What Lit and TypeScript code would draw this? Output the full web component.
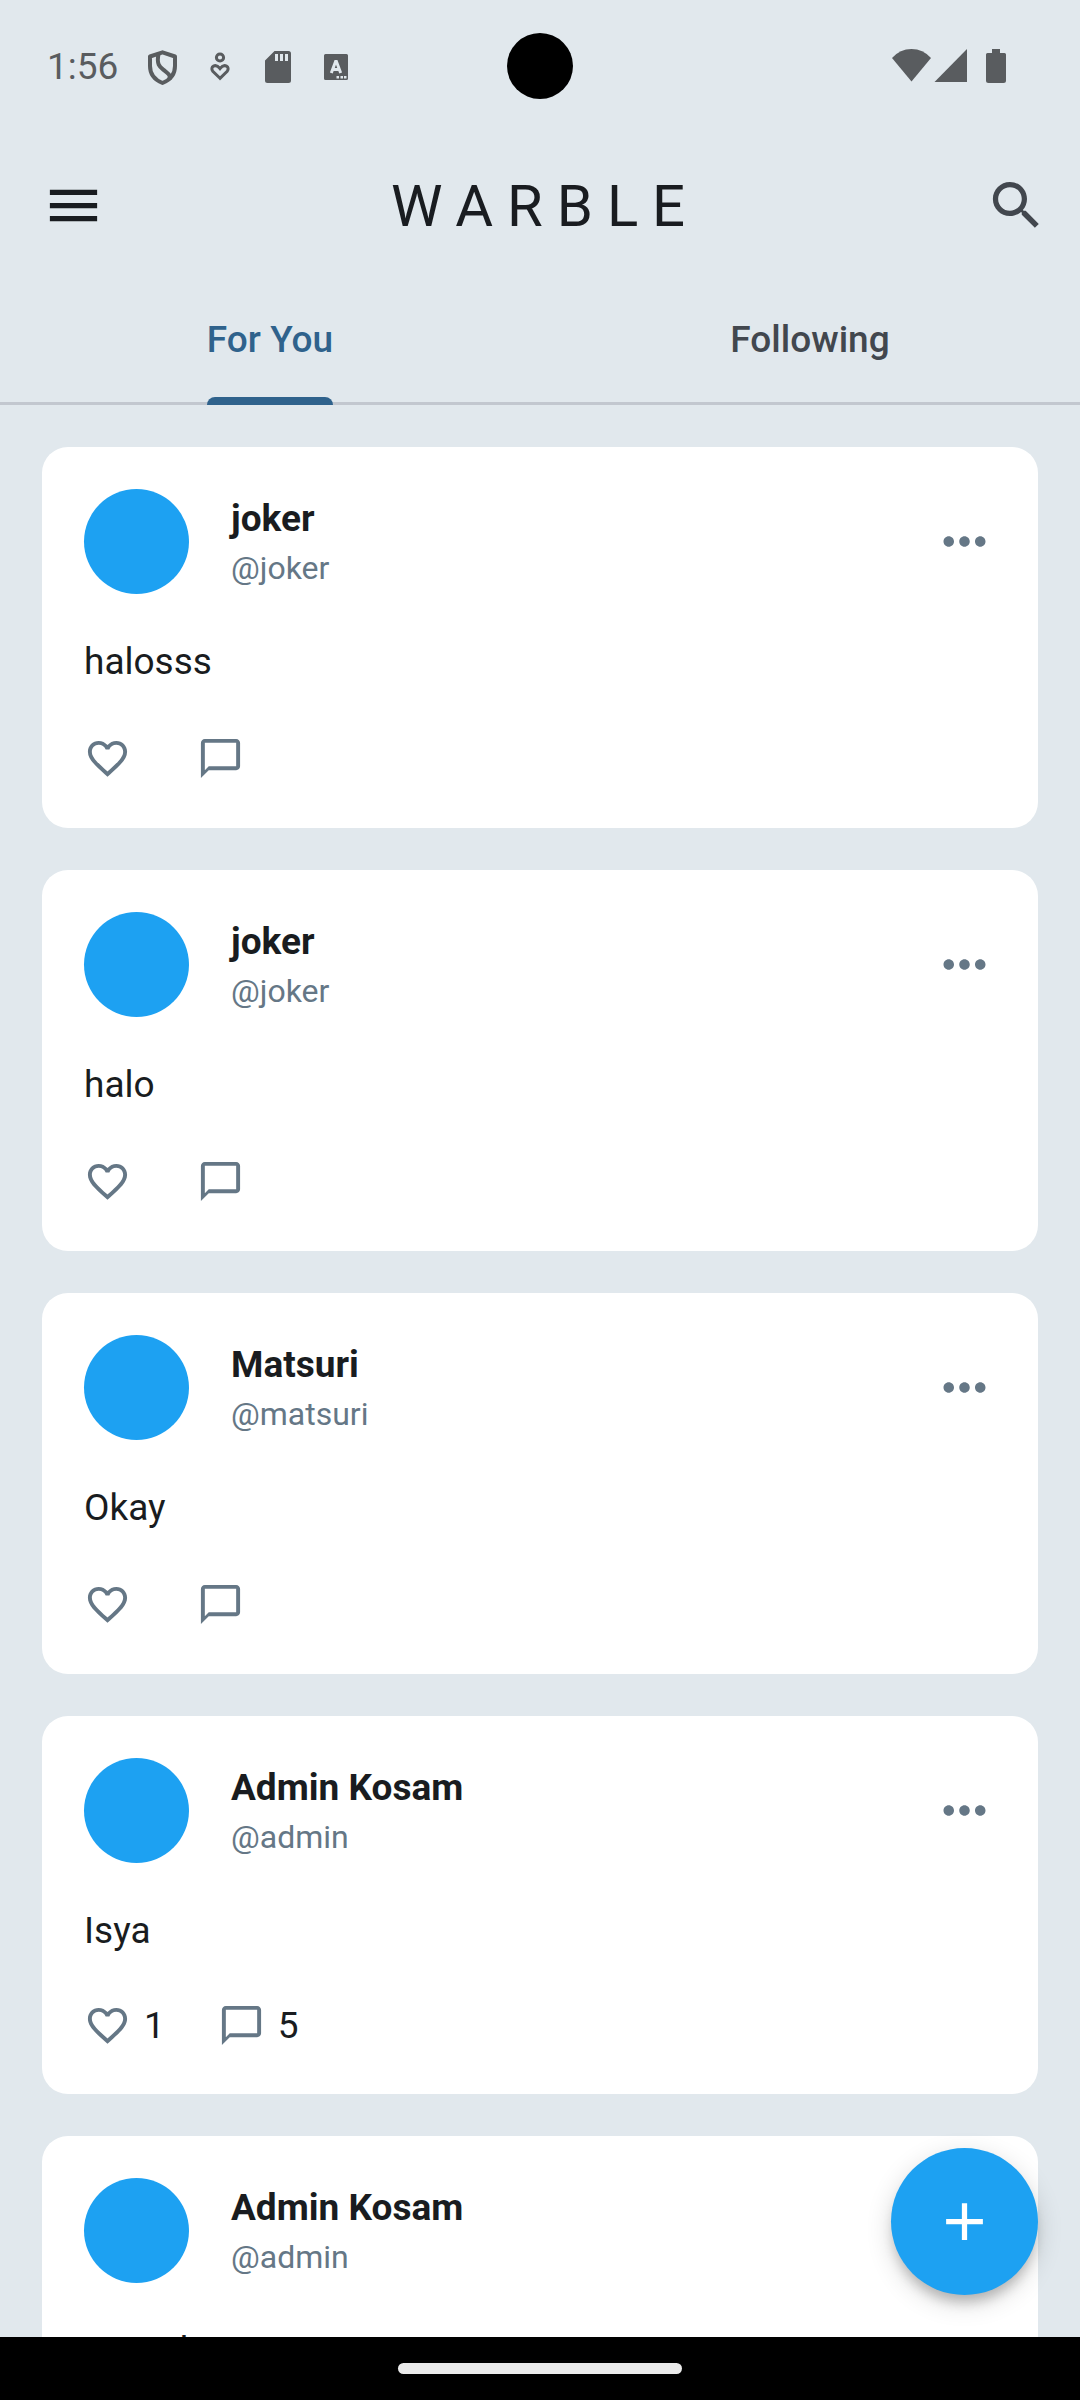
import { LitElement, html, svg, css, nothing } from "lit";
import { customElement, property } from "lit/decorators.js";

interface Post {
  name: string;
  handle: string;
  text: string;
  likes?: number;
  replies?: number;
}

const POSTS: Post[] = [
  { name: "joker", handle: "@joker", text: "halosss" },
  { name: "joker", handle: "@joker", text: "halo" },
  { name: "Matsuri", handle: "@matsuri", text: "Okay" },
  { name: "Admin Kosam", handle: "@admin", text: "Isya", likes: 1, replies: 5 },
  { name: "Admin Kosam", handle: "@admin", text: "Rumah" },
];

const ICONS = {
  menu: "M3 18h18v-2H3v2zm0-5h18v-2H3v2zm0-7v2h18V6H3z",
  search:
    "M15.5 14h-.79l-.28-.27C15.41 12.59 16 11.11 16 9.5 16 5.91 13.09 3 9.5 3S3 5.91 3 9.5 5.91 16 9.5 16c1.61 0 3.09-.59 4.23-1.57l.27.28v.79l5 4.99L20.49 19l-4.99-5zm-6 0C7.01 14 5 11.99 5 9.5S7.01 5 9.5 5 14 7.01 14 9.5 11.99 14 9.5 14z",
  more: "M6 10c-1.1 0-2 .9-2 2s.9 2 2 2 2-.9 2-2-.9-2-2-2zm12 0c-1.1 0-2 .9-2 2s.9 2 2 2 2-.9 2-2-.9-2-2-2zm-6 0c-1.1 0-2 .9-2 2s.9 2 2 2 2-.9 2-2-.9-2-2-2z",
  heart:
    "M16.5 3c-1.74 0-3.41.81-4.5 2.09C10.91 3.81 9.24 3 7.5 3 4.42 3 2 5.42 2 8.5c0 3.78 3.4 6.86 8.55 11.54L12 21.35l1.45-1.32C18.6 15.36 22 12.28 22 8.5 22 5.42 19.58 3 16.5 3zm-4.4 15.55l-.1.1-.1-.1C7.14 14.24 4 11.39 4 8.5 4 6.5 5.5 5 7.5 5c1.54 0 3.04.99 3.57 2.36h1.87C13.46 5.99 14.96 5 16.5 5c2 0 3.5 1.5 3.5 3.5 0 2.89-3.14 5.74-7.9 10.05z",
  chat: "M20 2H4c-1.1 0-2 .9-2 2v18l4-4h14c1.1 0 2-.9 2-2V4c0-1.1-.9-2-2-2zm0 14H6l-2 2V4h16v12z",
  plus: "M19 13h-6v6h-2v-6H5v-2h6V5h2v6h6v2z",
};

const icon = (name: keyof typeof ICONS) =>
  html`<svg class="icon" viewBox="0 0 24 24" aria-hidden="true">${svg`<path d=${ICONS[name]} />`}</svg>`;

@customElement("status-bar")
class StatusBar extends LitElement {
  static styles = css`
    :host {
      display: grid;
      grid-template-columns: 1fr auto 1fr;
      align-items: center;
      height: 132px;
      padding: 0 47px;
      color: #595c5f;
      font-size: 37px;
    }
    svg {
      display: block;
      fill: currentColor;
    }
    .left,
    .right {
      display: flex;
      align-items: center;
    }
    .left {
      gap: 28px;
    }
    .right {
      justify-content: flex-end;
      padding-right: 26px;
    }
    .camera {
      width: 66px;
      height: 66px;
      border-radius: 50%;
      background: #000;
    }
  `;

  render() {
    return html`
      <div class="left">
        <time>1:56</time>
        <svg width="206" height="40" viewBox="146 46 206 40" aria-hidden="true">
          <g fill="none" stroke="currentColor" stroke-width="4">
            <path d="M162.5 52.300 L175 56.500 V66 C175 74 170 80 162.500 83 C155 80 150 74 150 66 V56.500 Z" stroke-linejoin="round" />
            <path d="M158.500 54 C156 66 161 67.500 165 71 C168.500 74 170.500 75 169.500 79" />
            <circle cx="220" cy="57.500" r="3.600" stroke-width="3" />
            <path d="M220 78.300 L212.800 71.200 C209.500 67 215.500 62.800 220 68.600 C224.500 62.800 230.500 67 227.200 71.200 Z" stroke-width="3" />
          </g>
          <path fill-rule="evenodd" d="M274.500 51 H288.500 Q291 51 291 53.500 V80.500 Q291 83 288.500 83 H267.500 Q265 83 265 80.500 V60.500 Z M275 54 V61 H278 V54 Z M280 54 V61 H283 V54 Z M285 54 V61 H288 V54 Z" />
          <path fill-rule="evenodd" d="M325.500 54 H346.500 Q348 54 348 55.500 V78.500 Q348 80 346.500 80 H325.500 Q324 80 324 78.500 V55.500 Q324 54 325.500 54 Z M336.500 76 V78.500 H339 V76 Z M340.500 76 V78.500 H343 V76 Z M344 76 V78.500 H346.500 V76 Z" />
          <path d="M331.300 73 L335.600 61.500 H336.400 L340.700 73 M333 69.500 H339" fill="none" stroke="#e1e8ed" stroke-width="3" />
        </svg>
      </div>
      <div class="camera"></div>
      <div class="right">
        <svg width="116" height="36" viewBox="891 48 116 36" aria-hidden="true">
          <path d="M911.500 81.500 L892 58 Q900 49 911.500 49 Q923 49 931 58 Z" />
          <path d="M934.500 82 L967 49 V82 Z" />
          <path d="M992 49 H1000 V53 H1004.500 Q1006 53 1006 54.500 V80.500 Q1006 83 1003.500 83 H988.500 Q986 83 986 80.500 V54.500 Q986 53 987.500 53 H992 Z" />
        </svg>
      </div>
    `;
  }
}

@customElement("post-card")
class PostCard extends LitElement {
  @property({ attribute: false }) post!: Post;

  static styles = css`
    :host {
      display: flex;
      flex-direction: column;
      flex: none;
      gap: 42px;
      padding: 42px;
      border-radius: 26px;
      background: #fff;
    }
    button {
      display: flex;
      align-items: center;
      padding: 0;
      border: 0;
      background: none;
      color: inherit;
      font: inherit;
      cursor: pointer;
    }
    .icon {
      display: block;
      width: 47px;
      height: 47px;
      fill: #657786;
    }
    .head {
      display: flex;
      align-items: center;
      gap: 42px;
    }
    .avatar {
      width: 105px;
      height: 105px;
      border-radius: 50%;
      background: #1da1f2;
    }
    .who {
      flex: 1;
    }
    .name,
    .handle,
    .text {
      margin: 0;
      font-size: 37px;
      line-height: 52px;
    }
    .name {
      font-weight: 700;
    }
    .handle {
      color: #657786;
      font-size: 32px;
      line-height: 46px;
    }
    .more .icon {
      width: 63px;
      height: 63px;
    }
    .actions {
      display: flex;
      align-items: center;
      gap: 53px;
      min-height: 56px;
    }
    .actions.counted {
      min-height: 53px;
    }
    .actions button {
      gap: 13px;
    }
  `;

  render() {
    const { name, handle, text, likes, replies } = this.post;
    const counted = likes !== undefined;
    return html`
      <div class="head">
        <div class="avatar"></div>
        <div class="who">
          <h2 class="name">${name}</h2>
          <p class="handle">${handle}</p>
        </div>
        <button class="more" aria-label="More">${icon("more")}</button>
      </div>
      <p class="text">${text}</p>
      <div class="actions ${counted ? "counted" : ""}">
        <button aria-label="Like">${icon("heart")}<span>${likes ?? nothing}</span></button>
        <button aria-label="Reply">${icon("chat")}<span>${replies ?? nothing}</span></button>
      </div>
    `;
  }
}

@customElement("app-root")
class AppRoot extends LitElement {
  static styles = css`
    :host {
      display: flex;
      flex-direction: column;
      height: 100vh;
      overflow: hidden;
      background: #e1e8ed;
      color: #191c20;
      font-family: Roboto, "Liberation Sans", sans-serif;
      font-size: 37px;
    }
    button {
      padding: 0;
      border: 0;
      background: none;
      color: inherit;
      font: inherit;
      cursor: pointer;
    }
    .icon {
      display: block;
      width: 63px;
      height: 63px;
      fill: currentColor;
    }
    .bar {
      display: grid;
      grid-template-columns: 1fr auto 1fr;
      align-items: center;
      height: 147px;
      padding: 0 32px 0 42px;
    }
    .title {
      margin: 0;
      font-size: 58px;
      font-weight: 400;
      letter-spacing: 14px;
    }
    .search {
      justify-self: end;
      color: #42474e;
    }
    .tabs {
      display: flex;
      border-bottom: 3px solid #c2c7cf;
    }
    .tab {
      display: flex;
      flex: 1;
      justify-content: center;
      height: 123px;
      color: #42474e;
      font-weight: 500;
    }
    .label {
      position: relative;
      display: flex;
      align-items: center;
      box-sizing: border-box;
      height: 126px;
      padding-bottom: 6px;
    }
    .selected {
      color: #2f628c;
    }
    .selected .label::after {
      content: "";
      position: absolute;
      right: 0;
      bottom: 0;
      left: 0;
      height: 8px;
      border-radius: 8px 8px 0 0;
      background: currentColor;
    }
    .body {
      position: relative;
      display: flex;
      flex: 1;
      flex-direction: column;
      min-height: 0;
      overflow: hidden;
    }
    .feed {
      display: flex;
      flex-direction: column;
      gap: 42px;
      padding: 42px;
      min-height: 0;
    }
    .compose {
      position: absolute;
      right: 42px;
      bottom: 42px;
      display: grid;
      place-items: center;
      width: 147px;
      height: 147px;
      border-radius: 50%;
      background: #1da1f2;
      color: #fff;
      box-shadow:
        0 10px 12px -3px rgba(0, 0, 0, 0.2),
        0 8px 26px rgba(0, 0, 0, 0.16);
    }
    .gestures {
      display: grid;
      place-items: center;
      height: 63px;
      background: #000;
    }
    .pill {
      width: 284px;
      height: 11px;
      border-radius: 6px;
      background: #ebebeb;
    }
  `;

  render() {
    return html`
      <status-bar></status-bar>
      <header class="bar">
        <button class="menu" aria-label="Menu">${icon("menu")}</button>
        <h1 class="title">WARBLE</h1>
        <button class="search" aria-label="Search">${icon("search")}</button>
      </header>
      <nav class="tabs" role="tablist">
        <button class="tab selected" role="tab" aria-selected="true"><span class="label">For You</span></button>
        <button class="tab" role="tab" aria-selected="false"><span class="label">Following</span></button>
      </nav>
      <main class="body">
        <div class="feed">${POSTS.map((post) => html`<post-card .post=${post}></post-card>`)}</div>
        <button class="compose" aria-label="New post">${icon("plus")}</button>
      </main>
      <footer class="gestures"><div class="pill"></div></footer>
    `;
  }
}
